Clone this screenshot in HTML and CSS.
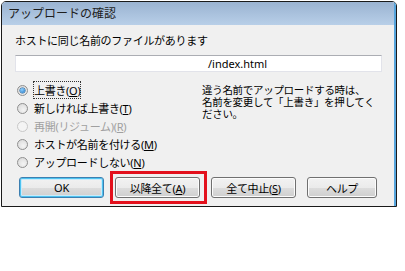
FILE: index.html
```html
<!DOCTYPE html>
<html lang="ja">
<head>
  <meta charset="UTF-8" />
  <title>アップロードの確認</title>
  <link rel="stylesheet" href="styles.css">
</head>
<body>
  <div class="window">
    <div class="frame">
      <div class="titlebar">アップロードの確認</div>

      <div class="content">
        <p class="message">ホストに同じ名前のファイルがあります</p>
        <div class="path">/index.html</div>

        <div class="options">
          <div class="radios">
            <label class="radio checked"><span class="dot"></span><span class="focus">上書き(<span class="key">O</span>)</span></label>
            <label class="radio"><span class="dot"></span><span>新しければ上書き(<span class="key">T</span>)</span></label>
            <label class="radio disabled"><span class="dot"></span><span>再開(リジューム)(<span class="key">R</span>)</span></label>
            <label class="radio"><span class="dot"></span><span>ホストが名前を付ける(<span class="key">M</span>)</span></label>
            <label class="radio"><span class="dot"></span><span>アップロードしない(<span class="key">N</span>)</span></label>
          </div>
          <p class="note">違う名前でアップロードする時は、<br>名前を変更して「上書き」を押してく<br>ださい。</p>
        </div>

        <div class="buttons">
          <button class="btn default">OK</button>
          <button class="btn marked">以降全て(<span class="key">A</span>)</button>
          <button class="btn">全て中止(<span class="key">S</span>)</button>
          <button class="btn small">ヘルプ</button>
        </div>
      </div>
    </div>
  </div>
</body>
</html>
```

FILE: styles.css
```css
html, body {
  margin: 0;
  padding: 0;
  background: #fff;
  font-family: "Noto Sans", "Noto Sans CJK JP", sans-serif;
  color: #000;
}

.window {
  margin: 1px 0 0 1px;
  width: 394px;
  border: 1px solid #1a1a1a;
  border-radius: 5px 5px 0 0;
  overflow: hidden;
}

.frame {
  border-right: 2px solid #56a4dc;
  background: #f0f0f0;
}

.titlebar {
  height: 23px;
  line-height: 23px;
  padding-left: 6px;
  font-size: 12px;
  color: #1e1e1e;
  background: linear-gradient(#9ab3d1, #b8cfe8);
}

.content {
  padding: 9px 12px 8px 13px;
}

.message {
  margin: 0;
  font-size: 11px;
  line-height: 14px;
  letter-spacing: -0.3px;
}

.path {
  margin-top: 7px;
  width: 367px;
  height: 17px;
  box-sizing: border-box;
  border: 1px solid #e2e3ea;
  border-top-color: #abadb3;
  background: #fff;
  font-size: 11px;
  line-height: 15px;
  padding-left: 192px;
}

.options {
  margin-top: 9px;
  display: flex;
}

.radios {
  width: 187px;
  display: flex;
  flex-direction: column;
}

.radio {
  height: 18px;
  display: flex;
  align-items: center;
  gap: 6px;
  padding-left: 2px;
  font-size: 11px;
  letter-spacing: -0.3px;
}

.key {
  text-decoration: underline;
}

.dot {
  width: 9px;
  height: 9px;
  border: 1px solid #8f8f8f;
  border-radius: 50%;
  background: radial-gradient(circle at 60% 65%, #f4f4f4, #d6d6d6);
  display: flex;
  align-items: center;
  justify-content: center;
  flex: none;
}

.checked .dot::after {
  content: "";
  width: 5px;
  height: 5px;
  border-radius: 50%;
  background: radial-gradient(circle at 40% 35%, #8fd0ff, #1a72c2);
  box-shadow: 0 0 0 0.5px #1f5e96;
}

.focus {
  outline: 1px dotted #333;
}

.disabled {
  color: #a0a0a0;
}

.disabled .dot {
  border-color: #c8c8c8;
  background: #f4f4f4;
}

.note {
  margin: 3px 0 0;
  font-size: 10.5px;
  line-height: 12px;
  letter-spacing: -0.3px;
}

.buttons {
  margin-top: 6px;
  padding-left: 4px;
  display: flex;
  gap: 11px;
}

.btn {
  position: relative;
  width: 85px;
  height: 21px;
  padding: 0;
  border: 1px solid #707070;
  border-radius: 3px;
  box-shadow: inset 0 0 0 1px #fcfcfc;
  background: linear-gradient(#f2f2f2 0%, #ebebeb 50%, #dddddd 51%, #cfcfcf 100%);
  font-family: inherit;
  font-size: 11px;
  color: #000;
  letter-spacing: -0.3px;
}

.btn.small {
  width: 70px;
}

.btn.default {
  border-color: #3c7fb1;
  box-shadow: inset 0 0 0 1px #4ec3f0, inset 0 0 0 2px #c8ebfb;
}

.btn.marked::after {
  content: "";
  position: absolute;
  top: -7px;
  bottom: -7px;
  left: -6px;
  right: -8px;
  border: 3px solid #e3101c;
}
```
